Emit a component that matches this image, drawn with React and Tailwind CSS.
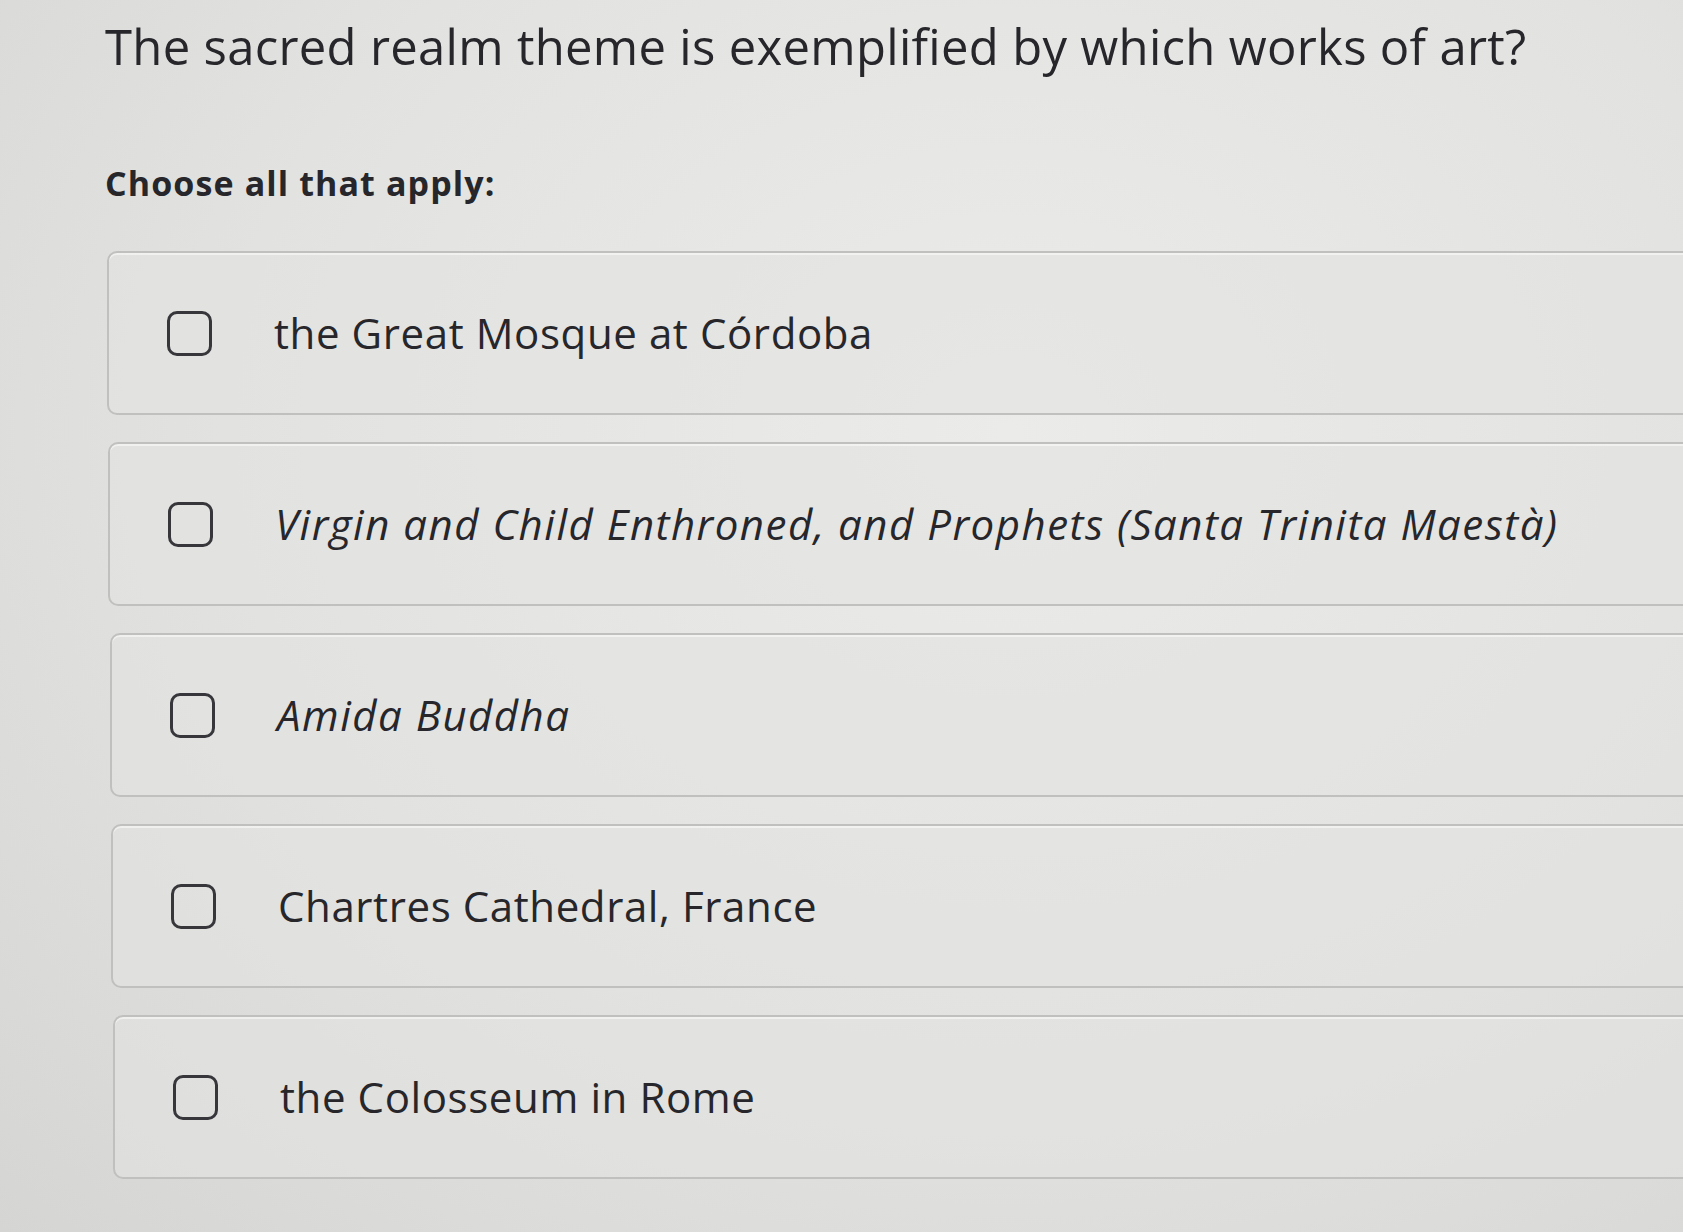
import React from 'react';

const OPTIONS = [
  { label: 'the Great Mosque at Córdoba', italic: false, shift: 'ml-[2px]' },
  { label: 'Virgin and Child Enthroned, and Prophets (Santa Trinita Maestà)', italic: true, shift: 'ml-[3px]' },
  { label: 'Amida Buddha', italic: true, shift: 'ml-[5px]' },
  { label: 'Chartres Cathedral, France', italic: false, shift: 'ml-[6px]' },
  { label: 'the Colosseum in Rome', italic: false, shift: 'ml-[8px]' },
];

function Option({ label, italic, shift }) {
  return (
    <label
      className={`${shift} flex h-[164px] w-[1700px] items-center rounded-[10px] border-2 border-[#c0c0be] bg-[#e3e3e1]/60 pl-[58px] shadow-[inset_0_2px_0_rgba(255,255,255,0.5)]`}
    >
      <span className="h-[45px] w-[45px] shrink-0 rounded-[10px] border-[3px] border-[#36363b] bg-transparent" />
      <span
        className={`ml-[62px] text-[42px] font-medium leading-[56px] text-[#26262b] ${
          italic ? 'italic tracking-[1.5px]' : 'tracking-[0.6px]'
        }`}
      >
        {label}
      </span>
    </label>
  );
}

export default function App() {
  return (
    <div
      className="relative h-[1232px] w-[1683px] overflow-hidden bg-[radial-gradient(ellipse_at_60%_35%,#ebebe9_0%,#e2e2e0_55%,#d5d5d3_100%)] pl-[105px] pt-[16px] text-[#26262b]"
      style={{ fontFamily: '"Open Sans", Lato, sans-serif' }}
    >
      <h1 className="text-[49px] font-medium leading-[60px] tracking-[0.3px]">
        The sacred realm theme is exemplified by which works of art?
      </h1>
      <p className="mt-[87px] text-[34px] font-bold leading-[40px] tracking-[1.1px]">Choose all that apply:</p>
      <div className="mt-[48px] flex flex-col gap-[27px]">
        {OPTIONS.map((o) => (
          <Option key={o.label} {...o} />
        ))}
      </div>
    </div>
  );
}
